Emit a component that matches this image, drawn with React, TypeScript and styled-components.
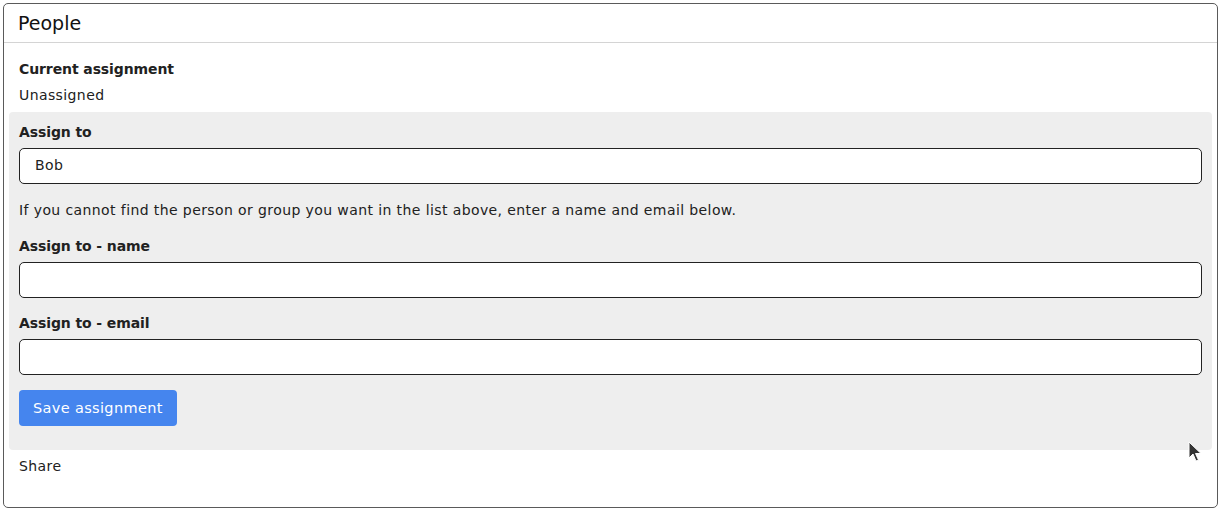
import React from "react";
import styled, { createGlobalStyle } from "styled-components";

const Global = createGlobalStyle`
  html, body { margin: 0; padding: 0; background: #fff; }
  body { font-family: "DejaVu Sans", sans-serif; color: #212121; }
  * { box-sizing: border-box; }
`;

const Card = styled.section`
  position: relative;
  margin: 3px 6px 4px 3px;
  border: 1px solid #5a5a5a;
  border-radius: 5px;
  background: #fff;
`;

const Header = styled.header`
  height: 39px;
  padding: 0 14px;
  border-bottom: 1px solid #d4d4d4;
  font-size: 19px;
  line-height: 38px;
  color: #111;
`;

const Body = styled.div`
  padding: 15px 15px 31px;
`;

const Heading = styled.div`
  font-size: 14px;
  padding-top: 2px;
  line-height: 19px;
  font-weight: 700;
  letter-spacing: -0.1px;
  margin-bottom: 5px;
`;

const Text = styled.div<{ $mb?: number }>`
  font-size: 14px;
  padding-top: 2px;
  line-height: 19px;
  letter-spacing: 0.4px;
  margin-bottom: ${(p) => p.$mb ?? 0}px;
`;

const Panel = styled.div`
  margin: 7px -10px 5px;
  padding: 9px 10px 24px;
  background: #eeeeee;
  border-radius: 4px;
`;

const Field = styled.div<{ $mb: number }>`
  display: flex;
  flex-direction: column;
  margin-bottom: ${(p) => p.$mb}px;
`;

const Label = styled.label`
  font-size: 14px;
  padding-top: 2px;
  line-height: 19px;
  font-weight: 700;
  letter-spacing: -0.1px;
  margin-bottom: 6px;
`;

const Input = styled.input`
  height: 36px;
  width: 100%;
  padding: 0 15px 2px;
  border: 1px solid #222;
  border-radius: 5px;
  background: #fff;
  font-family: inherit;
  font-size: 14px;
  letter-spacing: 0.4px;
  color: #212121;
  outline: none;
`;

const Button = styled.button`
  height: 36px;
  padding: 0 14px;
  border: none;
  border-radius: 4px;
  background: #4585ee;
  color: #fff;
  font-family: inherit;
  font-size: 14.5px;
  letter-spacing: 0.35px;
  cursor: pointer;
`;

const Cursor = styled.svg`
  position: absolute;
  left: 1184px;
  top: 437px;
  width: 14px;
  height: 22px;
  pointer-events: none;
`;

export default function App() {
  return (
    <>
      <Global />
      <Card>
        <Header>People</Header>
        <Body>
          <Heading>Current assignment</Heading>
          <Text>Unassigned</Text>
          <Panel>
            <Field $mb={15}>
              <Label>Assign to</Label>
              <Input defaultValue="Bob" />
            </Field>
            <Text $mb={15}>
              If you cannot find the person or group you want in the list above, enter a name and email below.
            </Text>
            <Field $mb={14}>
              <Label>Assign to - name</Label>
              <Input />
            </Field>
            <Field $mb={15}>
              <Label>Assign to - email</Label>
              <Input />
            </Field>
            <Button>Save assignment</Button>
          </Panel>
          <Text>Share</Text>
        </Body>
        <Cursor viewBox="0 0 14 22">
          <path d="M1 1 L1 17 L5 13 L8 20 L10.5 19 L7.5 12.5 L13 12.5 Z" fill="#333" stroke="#fff" strokeWidth="1" />
        </Cursor>
      </Card>
    </>
  );
}
